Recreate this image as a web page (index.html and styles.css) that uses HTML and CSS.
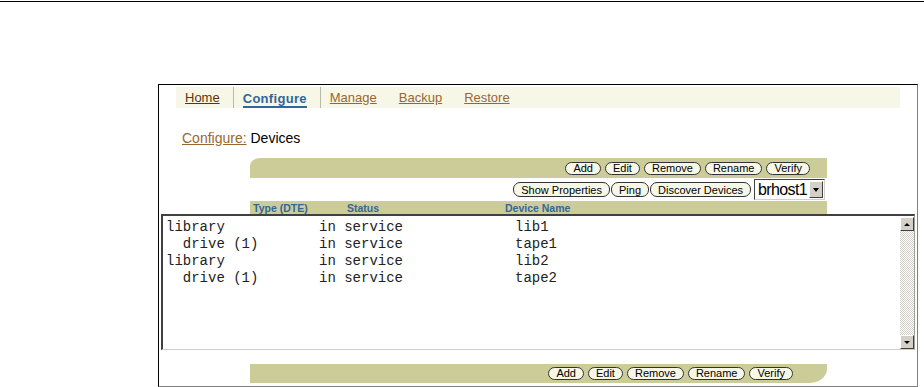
FILE: index.html
```html
<!DOCTYPE html>
<html>
<head>
  <title>Configure: Devices</title>
  <link rel="stylesheet" href="styles.css">
</head>
<body>

  <div class="rule"></div>

  <div class="frame">
    <div class="tabs">
      <a href="#" class="tab home">Home</a>
      <span class="tab-current"><a href="#">Configure</a></span>
      <a href="#" class="tab">Manage</a>
      <a href="#" class="tab">Backup</a>
      <a href="#" class="tab">Restore</a>
    </div>

    <div class="crumb"><a href="#">Configure:</a> Devices</div>

    <div class="panel">
      <div class="toolbar toolbar-top">
        <button>Add</button>
        <button>Edit</button>
        <button>Remove</button>
        <button>Rename</button>
        <button>Verify</button>
      </div>
      <div class="actions">
        <button>Show Properties</button>
        <button>Ping</button>
        <button>Discover Devices</button>
        <div class="select">
          <span class="select-value">brhost1</span>
          <span class="select-drop"></span>
        </div>
      </div>
      <div class="colhead">
        <span>Type (DTE)</span>
        <span>Status</span>
        <span>Device Name</span>
      </div>
    </div>

    <!-- device list -->
    <div class="listbox">
      <div class="rows">
        <div class="row"><span>library</span><span>in service</span><span>lib1</span></div>
        <div class="row"><span>  drive (1)</span><span>in service</span><span>tape1</span></div>
        <div class="row"><span>library</span><span>in service</span><span>lib2</span></div>
        <div class="row"><span>  drive (1)</span><span>in service</span><span>tape2</span></div>
      </div>
      <div class="scrollbar">
        <div class="sb-btn sb-up"></div>
        <div class="sb-track"></div>
        <div class="sb-btn sb-down"></div>
      </div>
    </div>

    <div class="panel panel-bottom">
      <div class="toolbar toolbar-bottom">
        <button>Add</button>
        <button>Edit</button>
        <button>Remove</button>
        <button>Rename</button>
        <button>Verify</button>
      </div>
    </div>
  </div>

</body>
</html>
```

FILE: styles.css
```css
body {
  margin: 0;
  font-family: "Liberation Sans", Arial, sans-serif;
  background: #fff;
}
.rule {
  height: 1px;
  margin-top: 1px;
  background: #000;
}
.frame {
  margin: 82px 0 0 158px;
  width: 760px;
  height: 303px;
  box-sizing: border-box;
  border: 1px solid;
  border-color: #000 #808080 #808080 #000;
}

/* tabs */
.tabs {
  display: flex;
  align-items: flex-start;
  margin: 2px 17px 0;
  height: 21px;
  padding-left: 9px;
  background: #f7f7e7;
  font-size: 13px;
}
.tab {
  margin-top: 3px;
  margin-right: 22px;
  line-height: 15px;
  color: #996633;
}
.tab.home {
  color: #663300;
  margin-right: 13px;
}
.tab-current {
  height: 21px;
  padding: 0 13px 0 9px;
  margin-right: 9px;
  border-left: 1px solid #b8b8a8;
  border-right: 1px solid #b8b8a8;
}
.tab-current a {
  display: inline-block;
  margin-top: 5px;
  line-height: 14px;
  font-weight: bold;
  letter-spacing: 0.3px;
  color: #336699;
  text-decoration: none;
  border-bottom: 2px solid #336699;
}

.crumb {
  margin: 22px 0 12px 23px;
  font-size: 14px;
  line-height: 16px;
}
.crumb a {
  color: #996633;
}

/* toolbars */
.panel {
  margin-left: 91px;
  width: 577px;
}
.panel-bottom {
  margin-top: 14px;
}
.toolbar {
  display: flex;
  justify-content: flex-end;
  align-items: center;
  gap: 4px;
  background: #cccc99;
}
.toolbar-top {
  height: 20px;
  padding-right: 17px;
  border-top-left-radius: 10px 8px;
}
.toolbar-bottom {
  height: 19px;
  padding-right: 34px;
  border-bottom-right-radius: 18px 14px;
}
button {
  height: 15px;
  padding: 0 7px;
  font: 11px "Liberation Sans", Arial, sans-serif;
  line-height: 12px;
  color: #000;
  background: #f7f7e7;
  border: 1px solid #333;
  border-radius: 7px;
}
.toolbar button {
  height: 13px;
  line-height: 11px;
}
.actions {
  display: flex;
  justify-content: flex-end;
  align-items: center;
  gap: 1px;
  height: 23px;
  padding-right: 2px;
}
.select {
  display: flex;
  justify-content: space-between;
  align-items: center;
  width: 71px;
  height: 21px;
  margin-left: 2px;
  box-sizing: border-box;
  border: 1px solid;
  border-color: #404040 #d4d0c8 #d4d0c8 #404040;
  background: #fff;
}
.select-value {
  padding-left: 3px;
  font-size: 16px;
  letter-spacing: -0.6px;
}
.select-drop {
  display: flex;
  align-items: center;
  justify-content: center;
  width: 14px;
  height: 17px;
  margin-right: 1px;
  box-sizing: border-box;
  background: #d4d0c8;
  border: 1px solid;
  border-color: #fff #404040 #404040 #fff;
}
.select-drop::after {
  content: "";
  border-left: 3px solid transparent;
  border-right: 3px solid transparent;
  border-top: 4px solid #000;
}
.colhead {
  display: grid;
  grid-template-columns: 94px 158px 1fr;
  height: 13px;
  box-sizing: border-box;
  padding: 2px 0 0 3px;
  background: #cccc99;
  font-size: 10.5px;
  font-weight: bold;
  line-height: 11px;
  color: #336699;
}

/* list */
.listbox {
  display: flex;
  margin-left: 2px;
  width: 754px;
  height: 136px;
  box-sizing: border-box;
  border-style: solid;
  border-width: 2px 1px 1px 2px;
  border-color: #404040 #a0a0a0 #d4d0c8 #404040;
}
.rows {
  flex: 1;
  padding: 3px 0 0 3px;
  font: 14px "Liberation Mono", "Courier New", monospace;
  line-height: 17px;
  color: #222;
}
.row {
  display: grid;
  grid-template-columns: 153px 196px 1fr;
  white-space: pre;
}
.scrollbar {
  display: flex;
  flex-direction: column;
  width: 14px;
  padding-top: 1px;
}
.sb-track {
  flex: 1;
  background: repeating-conic-gradient(#d4d0c8 0 25%, #fff 0 50%) 0 0 / 2px 2px;
}
.sb-btn {
  display: flex;
  align-items: center;
  justify-content: center;
  height: 14px;
  box-sizing: border-box;
  background: #d4d0c8;
  border: 1px solid;
  border-color: #fff #404040 #404040 #fff;
}
.sb-up::after {
  content: "";
  border-left: 3px solid transparent;
  border-right: 3px solid transparent;
  border-bottom: 3px solid #000;
}
.sb-down::after {
  content: "";
  border-left: 3px solid transparent;
  border-right: 3px solid transparent;
  border-top: 3px solid #000;
}
```
